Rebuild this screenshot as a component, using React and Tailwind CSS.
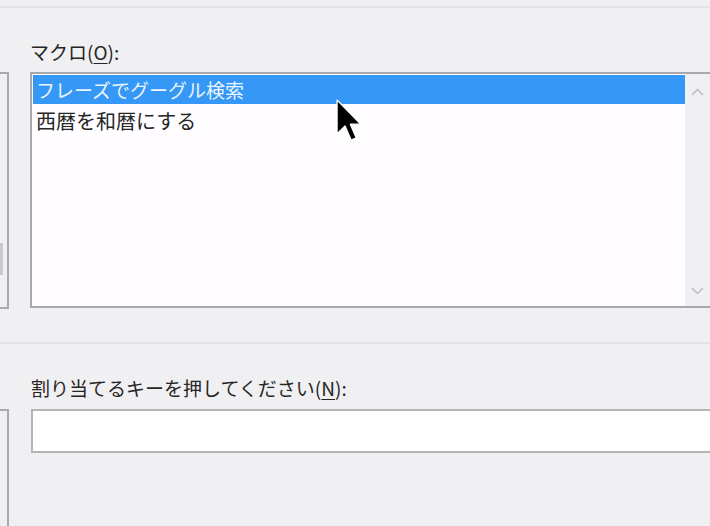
import React from "react";

function Cursor() {
  return (
    <svg
      className="absolute left-[336px] top-[99px]"
      width="28"
      height="46"
      viewBox="0 0 13.3 21.9"
    >
      <path
        d="M0.5 0.5 L0.5 16.5 L4.3 12.8 L7.2 19.5 L9.6 18.5 L6.8 12 L11.8 12 Z"
        fill="#000"
        stroke="#fff"
        strokeWidth="0.6"
        strokeLinejoin="round"
      />
    </svg>
  );
}

export default function App() {
  const font = {
    fontFamily: '"Noto Sans CJK JP", "Noto Sans", sans-serif',
  };
  return (
    <div
      className="relative w-[710px] h-[526px] overflow-hidden bg-[#f0eff2] text-[#262626] flex flex-col"
      style={font}
    >
      <div className="h-[6px] shrink-0" />
      <div className="h-[2px] shrink-0 bg-[#e4e3e6]" />

      {/* Row 1 */}
      <div className="flex shrink-0">
        <div className="shrink-0 mt-[64px] w-[9px] h-[237px] border-t-2 border-r-2 border-b-2 border-[#a9a8ab] flex flex-col">
          <div className="mt-[169px] w-[3px] h-[32px] bg-[#c9c8cb]" />
        </div>
        <div className="shrink-0 ml-[21px] flex flex-col">
          <div className="mt-[31px] h-[26px] leading-[26px] text-[19px] whitespace-nowrap">
            マクロ(<span className="underline underline-offset-[3px]">O</span>):
          </div>
          <div className="mt-[7px] w-[700px] h-[236px] border-2 border-[#a9a8ab] bg-[#fffdff] flex">
            <div className="flex-1 flex flex-col pt-[1px] pl-[1px]">
              <div className="h-[29px] bg-[#3598f7] text-[#eaf4ff] text-[19px] leading-[29px] pl-[3px] whitespace-nowrap">
                フレーズでグーグル検索
              </div>
              <div className="mt-[2px] h-[30px] text-[20px] leading-[30px] pl-[3px] whitespace-nowrap">
                西暦を和暦にする
              </div>
            </div>
            <div className="shrink-0 w-[43px] bg-[#f0eff2] flex flex-col">
              <div className="w-[24px] flex flex-col items-center justify-between h-full pt-[14px] pb-[11px]">
                <svg width="13" height="8" viewBox="0 0 13 8">
                  <path d="M1 7 L6.5 1.5 L12 7" fill="none" stroke="#bdbcbf" strokeWidth="1.5" />
                </svg>
                <svg width="13" height="8" viewBox="0 0 13 8">
                  <path d="M1 1 L6.5 6.5 L12 1" fill="none" stroke="#bdbcbf" strokeWidth="1.5" />
                </svg>
              </div>
            </div>
          </div>
        </div>
      </div>

      <div className="mt-[33px] h-[2px] shrink-0 bg-[#e3e2e5]" />

      {/* Row 2 */}
      <div className="flex flex-1">
        <div className="shrink-0 mt-[65px] w-[9px] border-t-2 border-r-2 border-[#a9a8ab]" />
        <div className="shrink-0 ml-[22px] flex flex-col">
          <div className="mt-[31px] h-[26px] leading-[26px] text-[19px] whitespace-nowrap">
            割り当てるキーを押してください(<span className="underline underline-offset-[3px]">N</span>):
          </div>
          <div className="mt-[8px] w-[700px] h-[44px] border-2 border-[#b4b3b6] bg-white" />
        </div>
      </div>

      <Cursor />
    </div>
  );
}
